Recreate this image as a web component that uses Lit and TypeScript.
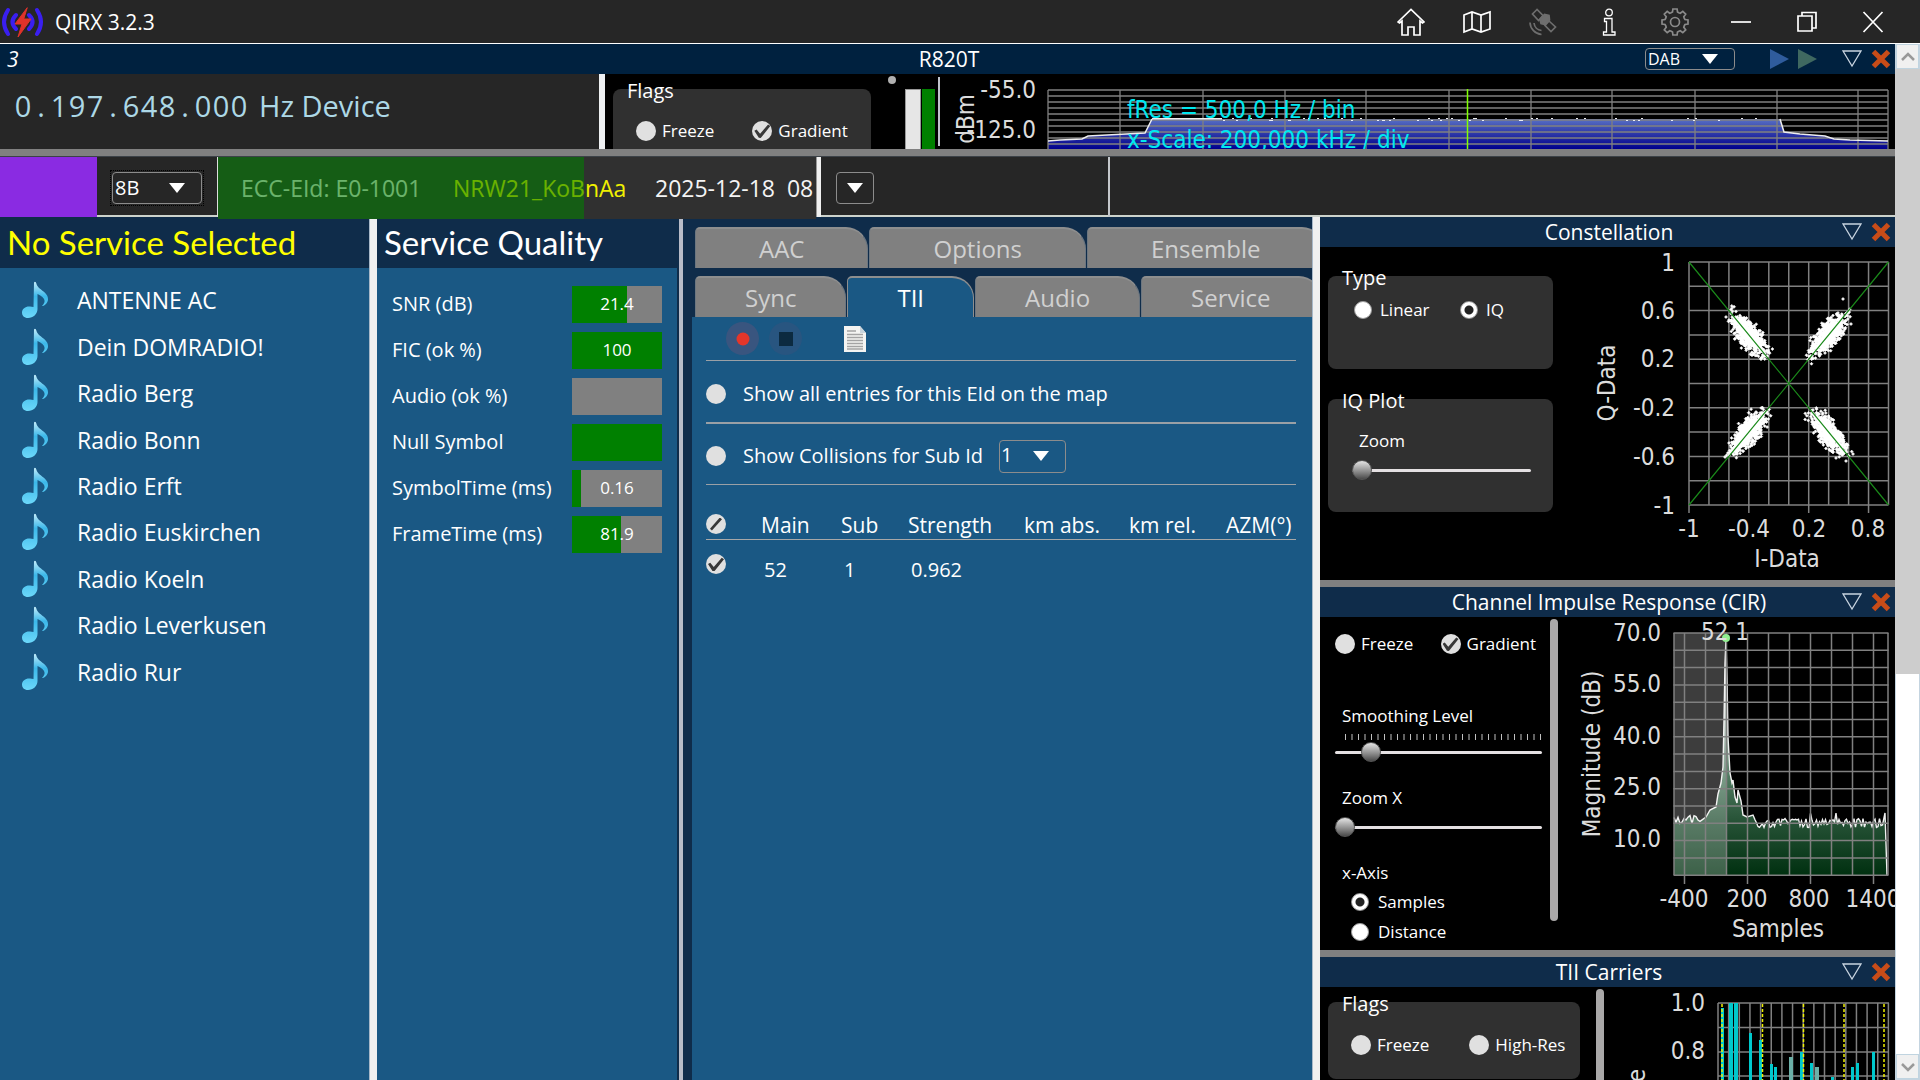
import { LitElement, html, svg, css } from "lit";
import { customElement, property } from "lit/decorators.js";

const line = (x1: number, y1: number, x2: number, y2: number) =>
  svg`<line x1=${x1} y1=${y1} x2=${x2} y2=${y2}></line>`;

const range = (n: number) => Array.from({ length: n }, (_, i) => i);

/** Small deterministic generator so that the plots look the same on each load. */
function seeded(seed: number) {
  let s = seed;
  return () => {
    s = (s * 1664525 + 1013904223) % 4294967296;
    return s / 4294967296;
  };
}

const base = css`
  :host {
    --navy: #0f2c4a;
    --blue: #1a5884;
    --plot: "DejaVu Sans Condensed", "Noto Sans", sans-serif;
    box-sizing: border-box;
    font-family: "Open Sans", "Noto Sans", sans-serif;
    color: #fff;
  }
  *, *::before, *::after { box-sizing: border-box; }
  button {
    background: none; border: 0; padding: 0; margin: 0;
    color: inherit; font: inherit; cursor: pointer;
    display: grid; place-items: center;
  }
  svg { display: block; }
  .check, .radio {
    appearance: none; margin: 0; flex: none;
    width: 20px; height: 20px; border-radius: 50%;
    background: #e0e0e0; display: grid; place-items: center;
  }
  .check.on:checked::before {
    content: ""; width: 16px; height: 14px; background: #383838;
    clip-path: polygon(0 48%, 14% 40%, 36% 70%, 86% 4%, 100% 14%, 40% 100%, 28% 98%);
  }
  .check.part::before {
    content: ""; width: 12px; height: 13px; background: #383838;
    clip-path: polygon(0 86%, 82% 0, 100% 14%, 16% 100%);
  }
  .radio { width: 18px; height: 18px; background: #fff; border: 1px solid #999; }
  .radio:checked { background: radial-gradient(circle, #222 0 4px, #fff 5px); }
  .slider {
    appearance: none; display: block; width: 100%; height: 20px; margin: 0; background: none;
  }
  .slider::-webkit-slider-runnable-track {
    height: 3px; border-radius: 2px; background: #e4e0e2;
  }
  .slider::-webkit-slider-thumb {
    appearance: none; width: 20px; height: 20px; margin-top: -9px; border-radius: 50%;
    border: 1px solid #555; background: linear-gradient(#e4e4e4, #8a8a8a 60%, #4a4a4a);
  }
  .opt { display: flex; align-items: center; gap: 6px; font-size: 17px; line-height: 20px; white-space: nowrap; }
  .combo { display: grid; align-items: center; }
  .combo > * { grid-area: 1 / 1; }
  .combo select {
    appearance: none; width: 100%; height: 100%; margin: 0; padding: 0 2px;
    background: none; color: #fff; border: 1px solid #8c8c8c; border-radius: 4px; font: inherit;
  }
  .combo svg { justify-self: end; margin-right: 17px; pointer-events: none; }
  .group {
    border: 0; margin: 0; padding: 0 14px; min-width: 0;
    background: #303030; border-radius: 8px; position: relative;
  }
  .group legend { padding: 0; float: left; width: 100%; margin-top: -12px; font-size: 20px; line-height: 28px; }
`;

const arrow = html`<svg width="16" height="10" viewBox="0 0 16 10"><path d="M0 0H16L8 10Z" fill="#fff"></path></svg>`;

@customElement("panel-bar")
class PanelBar extends LitElement {
  @property() heading = "";
  @property({ type: Boolean }) top = false;
  static styles = [base, css`
    :host {
      display: grid; grid-template-columns: 1fr auto 1fr; align-items: center;
      height: 30px; padding: 0 4px 0 7px; background: var(--navy); flex: none;
    }
    :host([top]) { background: #00213f; }
    h2 { margin: 0; font-size: 21px; line-height: 28px; font-weight: 400; }
    .right { display: flex; justify-content: flex-end; align-items: center; gap: 9px; }
  `];
  render() {
    return html`
      <slot name="left"><span></span></slot>
      <h2>${this.heading}</h2>
      <div class="right">
        <slot></slot>
        <button aria-label="Collapse ${this.heading}">
          <svg width="20" height="18" viewBox="0 0 20 18"><path d="M1 1H19L10 16Z" fill="none" stroke="#c8d4e0" stroke-width="1.3"></path></svg>
        </button>
        <button aria-label="Close ${this.heading}">
          <svg width="20" height="20" viewBox="0 0 20 20"><path d="M2.5 2.5L17.5 17.5M17.5 2.5L2.5 17.5" stroke="#c84c18" stroke-width="5"></path></svg>
        </button>
      </div>`;
  }
}

@customElement("title-bar")
class TitleBar extends LitElement {
  static styles = [base, css`
    :host {
      display: flex; align-items: center; height: 44px; padding-right: 14px;
      background: #262626; border-bottom: 1px solid #fff; flex: none;
    }
    h1 { margin: 0 auto 0 10px; font-size: 21px; line-height: 28px; font-weight: 400; }
    button { width: 66px; height: 43px; }
    .dim { color: #6e6e6e; }
    .gear { color: #8a8a8a; }
    button svg { fill: none; stroke: currentColor; stroke-width: 1.7; }
    .info svg { stroke-width: 1.3; }
  `];
  render() {
    const teeth = range(8).map((i) => {
      const p = (r: number, d: number) => {
        const a = ((i * 45 + d) * Math.PI) / 180;
        return `${(14 + r * Math.sin(a)).toFixed(1)} ${(14 - r * Math.cos(a)).toFixed(1)}`;
      };
      return `${i ? "L" : "M"}${p(10.3, -14)}L${p(13.2, -9)}L${p(13.2, 9)}L${p(10.3, 14)}L${p(10, 22)}`;
    }).join("") + "Z";
    return html`
      <svg width="45" height="40" viewBox="0 0 45 40" fill="none" stroke="#3a1ff0" stroke-width="4" stroke-linecap="round">
        <path d="M8 8Q0 20 8 32M16 13Q9 20 16 27M37 8Q45 20 37 32M29 13Q36 20 29 27"></path>
        <path d="M27 6L15 22H22L18 35L31 17H24Z" fill="#e0322a" stroke="#e0322a" stroke-width="1"></path>
      </svg>
      <h1>QIRX 3.2.3</h1>
      <button aria-label="Home"><svg width="28" height="28" viewBox="0 0 28 28"><path d="M1 14L14 1.500L27 14L25.500 15L23 13V27H17V19H11V27H5V13L2.500 15Z"></path></svg></button>
      <button aria-label="Map"><svg width="28" height="28" viewBox="0 0 28 28"><path d="M1 7L9 4L18 7L27 4V21L18 24L9 21L1 24ZM9 4V21M18 7V24"></path></svg></button>
      <button class="dim" aria-label="Satellite">
        <svg width="28" height="28" viewBox="0 0 28 28">
          <path d="M8 1.500L3.500 6L9.500 12.500L14 7.500ZM20 13L26.500 19L22 23.500L16 17.500Z"></path>
          <path d="M11 11.500L15.500 6.500L20 7.500L20.500 12L16 16.500L12 15.500Z" fill="currentColor"></path>
          <path d="M5 15A8.500 8.500 0 0 0 12.500 22.500M1 14.500A12.500 12.500 0 0 0 12.500 26.500"></path>
        </svg>
      </button>
      <button class="info" aria-label="Info"><svg width="28" height="28" viewBox="0 0 28 28"><circle cx="14" cy="4.500" r="3.300"></circle><path d="M9.500 10.500H17V24H20V27H8.500V24H11.500V13.500H9.500Z"></path></svg></button>
      <button class="gear" aria-label="Settings"><svg width="28" height="28" viewBox="0 0 28 28"><path d=${teeth}></path><circle cx="14" cy="14" r="4.500"></circle></svg></button>
      <button aria-label="Minimize"><svg width="20" height="20" viewBox="0 0 20 20"><path d="M0 10H20"></path></svg></button>
      <button aria-label="Restore"><svg width="22" height="22" viewBox="0 0 22 22"><path d="M2 5H16V20H2ZM6 5V1.500H20V17H16"></path></svg></button>
      <button aria-label="Close"><svg width="22" height="22" viewBox="0 0 22 22"><path d="M1.500 1L20.500 21M20.500 1L1.500 21"></path></svg></button>`;
  }
}

@customElement("device-row")
class DeviceRow extends LitElement {
  static styles = [base, css`
    :host {
      display: grid; grid-template-columns: minmax(0, 599fr) 6px minmax(0, 337fr) minmax(0, 953fr);
      height: 75px; overflow: hidden; background: #000; flex: none;
    }
    .freq { background: #262626; color: #add8e6; display: flex; padding: 12px 14px; font-size: 29px; line-height: 40px; white-space: pre; }
    .freq i { font-style: normal; width: 18px; text-align: center; }
    .freq b { font-weight: 400; padding-left: 11px; }
    .split { background: #eef0f2; }
    .flags { display: flex; align-items: flex-start; padding-left: 8px; }
    .group { width: 258px; height: 90px; margin-top: 15px; }
    .opts { display: flex; gap: 38px; padding: 16px 0 0 9px; clear: both; }
    .thumb { width: 8px; height: 8px; border-radius: 50%; background: #b0b0b0; margin: 2px 9px 0 17px; flex: none; }
    .meter { display: flex; gap: 1px; height: 60px; margin-top: 15px; width: 30px; flex: none; }
    .meter .a { flex: 1; background: #e6e6e6; border: 1px solid #999; border-bottom: 0; }
    .meter .b { flex: 1; background: #008000; }
    .rule { width: 2px; height: 69px; background: #c0c4cc; margin: 3px 0 0 3px; flex: none; }
    .plot { width: 100%; height: 75px; font-family: var(--plot); font-size: 24px; }
  `];
  render() {
    const rnd = seeded(7);
    const freq = "0.197.648.000";
    const specks = range(60).map(() => {
      const x = Math.round(220 + rnd() * 610);
      return svg`<rect x=${x} y=${rnd() > 0.5 ? 44 : 46} width="2" height="1"></rect>`;
    });
    const outline = "106 67 118 66 140 65 146 62 165 61 203 59 210 45 838 45 842 58 858 60 883 62 892 65 908 66 946 67";
    return html`
      <div class="freq">${[...freq].map((c) => html`<i>${c}</i>`)}<b>Hz Device</b></div>
      <div class="split"></div>
      <div class="flags">
        <fieldset class="group">
          <legend>Flags</legend>
          <div class="opts">
            <label class="opt"><input class="check on" type="checkbox">Freeze</label>
            <label class="opt"><input class="check on" type="checkbox" checked>Gradient</label>
          </div>
        </fieldset>
        <span class="thumb"></span>
        <div class="meter"><span class="a"></span><span class="b"></span></div>
        <span class="rule"></span>
      </div>
      <svg class="plot" viewBox="0 0 953 75" preserveAspectRatio="xMinYMin meet">
        <defs><linearGradient id="sp" gradientUnits="userSpaceOnUse" x1="0" y1="45" x2="0" y2="75">
          <stop offset="0" stop-color="#5870c4"></stop><stop offset=".5" stop-color="#2c36a8"></stop><stop offset="1" stop-color="#00008c"></stop>
        </linearGradient></defs>
        <polygon points="106 75 ${outline} 946 75" fill="url(#sp)"></polygon>
        <g stroke="#808080" stroke-width="1.300">
          ${range(10).map((i) => line(106, 16 + i * 6, 946, 16 + i * 6))}
          ${[106, 178, 261, 343, 424, 507, 589, 670, 753, 835, 916, 946].map((x) => line(x, 16, x, 75))}
        </g>
        <polyline points="106 67 118 66 140 65 146 62 165 61 203 59 210 45" fill="none" stroke="#eee" stroke-width="1.500"></polyline>
        <polyline points="838 45 842 58 858 60 883 62 892 65 908 66 946 67" fill="none" stroke="#eee" stroke-width="1.500"></polyline>
        <g fill="#eee">${specks}<rect x="210" y="44" width="70" height="1.500"></rect></g>
        <line x1="525.500" y1="15" x2="525.500" y2="75" stroke="#7fff00" stroke-width="1.500"></line>
        <g fill="#dcdcdc">
          <text x="94" y="24" text-anchor="end">-55.0</text>
          <text x="94" y="64" text-anchor="end">-125.0</text>
          <text transform="translate(32 45) rotate(-90)" text-anchor="middle">dBm</text>
        </g>
        <g fill="#00e8f0">
          <text x="185" y="44">fRes = 500,0 Hz / bin</text>
          <text x="185" y="74">x-Scale: 200,000 kHz / div</text>
        </g>
      </svg>`;
  }
}

@customElement("channel-row")
class ChannelRow extends LitElement {
  static styles = [base, css`
    :host {
      display: grid; grid-template-columns: 97px 121px minmax(0, 598fr) 5px minmax(0, 289fr) minmax(0, 785fr);
      height: 61px; background: #262626; border-bottom: 2px solid #ccd2cc; border-top: 1px solid #3c4248;
      font-size: 23px; line-height: 30px; flex: none;
    }
    .lamp { background: #8a2be2; }
    .pick { padding: 15px 15px 11px; border-right: 1px solid #ddd; }
    .pick .combo { width: 90px; height: 32px; outline: 1px dotted #000; outline-offset: 1px; font-size: 20px; }
    .ens { position: relative; display: flex; align-items: center; padding-left: 23px; background: #303030; overflow: hidden; white-space: pre; color: #f4f4f4; }
    .ens span { flex: none; }
    .ens .id { width: 212px; }
    .ens .name { width: 202px; color: #f0f000; }
    .fill { position: absolute; inset: 0 auto 0 0; background: rgba(0, 128, 0, 0.56); }
    .split { background: #f0f0f0; border-left: 1px solid #999; }
    .extra { padding: 15px 15px; border-right: 2px solid #c4c8cc; }
    .extra .combo { width: 38px; height: 32px; }
    .extra .combo svg { margin-right: 11px; }
    .extra .combo select { color: transparent; }
  `];
  render() {
    return html`
      <div class="lamp"></div>
      <div class="pick"><div class="combo"><select aria-label="Channel"><option>8B</option></select>${arrow}</div></div>
      <div class="ens">
        <span class="id">ECC-EId: E0-1001</span><span class="name">NRW21_KoBnAa</span><span>2025-12-18  08</span>
        <div class="fill" style="width:61.200%"></div>
      </div>
      <div class="split"></div>
      <div class="extra"><div class="combo"><select aria-label="More"></select>${arrow}</div></div>
      <div></div>`;
  }
}

@customElement("service-list")
class ServiceList extends LitElement {
  static styles = [base, css`
    :host { display: block; background: var(--blue); min-width: 0; }
    h2 { margin: 0; height: 51px; padding: 0 7px; background: var(--navy); color: #ff0; font: 400 33px/50px Lato, sans-serif; white-space: nowrap; }
    ul { list-style: none; margin: 0; padding: 9px 0 0; display: grid; grid-auto-rows: 1fr; height: 427px; }
    button { display: flex; align-items: center; width: 100%; height: 100%; padding-left: 20px; gap: 27px; font-size: 23px; line-height: 30px; }
  `];
  render() {
    const names = ["ANTENNE AC", "Dein DOMRADIO!", "Radio Berg", "Radio Bonn", "Radio Erft", "Radio Euskirchen", "Radio Koeln", "Radio Leverkusen", "Radio Rur"];
    return html`
      <h2>No Service Selected</h2>
      <ul>${names.map((n) => html`<li><button>
        <svg width="30" height="38" viewBox="0 0 30 38">
          <defs><linearGradient id="n" x1="0" y1="0" x2="0" y2="1"><stop offset="0" stop-color="#c4ecfa"></stop><stop offset=".4" stop-color="#3cb8ea"></stop><stop offset="1" stop-color="#6cd8fa"></stop></linearGradient></defs>
          <path d="M14 1.500C15 0 16 1 16.500 3C18 9 29 11 28 19C27 23 24 25 22 25C26 21 26 17 17.500 13V28C17.500 33 13 37 8 37C4 37 2 34.500 2 31.500C2 27.500 6 25 10 25.500L13.500 26Z" fill="url(#n)"></path>
        </svg>${n}</button></li>`)}</ul>`;
  }
}

@customElement("service-quality")
class ServiceQuality extends LitElement {
  static styles = [base, css`
    :host { display: block; background: var(--blue); border-right: 2px solid var(--navy); min-width: 0; }
    h2 { margin: 0; height: 51px; padding: 0 7px; background: var(--navy); font: 400 33px/50px Lato, sans-serif; white-space: nowrap; }
    dl { margin: 0; padding: 13px 15px 0; display: grid; grid-template-columns: 180px 90px; grid-auto-rows: 46px; align-items: center; }
    dt { font-size: 20px; line-height: 28px; white-space: nowrap; }
    dd { margin: 0; height: 37px; background: #808080; display: grid; }
    dd > * { grid-area: 1 / 1; }
    .bar { background: #008000; }
    .val { place-self: center; font-size: 17px; line-height: 24px; }
  `];
  render() {
    const rows: [string, string, number][] = [
      ["SNR (dB)", "21.4", 61], ["FIC (ok %)", "100", 100], ["Audio (ok %)", "", 0],
      ["Null Symbol", "", 100], ["SymbolTime (ms)", "0.16", 10], ["FrameTime (ms)", "81.9", 54],
    ];
    return html`<h2>Service Quality</h2>
      <dl>${rows.map(([k, v, p]) => html`<dt>${k}</dt><dd><span class="bar" style="width:${p}%"></span><span class="val">${v}</span></dd>`)}</dl>`;
  }
}

@customElement("tii-tabs")
class TiiTabs extends LitElement {
  static styles = [base, css`
    :host { display: flex; flex-direction: column; background: var(--navy); min-width: 0; overflow: hidden; padding-left: 9px; }
    .tabs { display: flex; height: 41px; padding-left: 3px; gap: 1px; margin-bottom: 8px; flex: none; }
    .tabs.one { margin-top: 10px; }
    .tabs.two { margin-bottom: 0; }
    .tabs button {
      flex: none; padding: 0 63px; background: #808080; color: #d0d0d0;
      border: 1px solid #6c7680; border-top: 2px solid #8e8e8e; border-bottom: 0; border-radius: 5px 22px 0 0; font-size: 24px; line-height: 30px;
    }
    .tabs.two button { padding: 0 49px; }
    .tabs.two .active { background: var(--blue); color: #fff; border-color: #8e8e8e; }
    .body { flex: 1; background: var(--blue); padding: 3px 16px 0 14px; }
    .tools { display: flex; align-items: center; height: 37px; padding-left: 20px; gap: 10px; margin-bottom: 3px; }
    .tools button { width: 33px; height: 33px; border-radius: 50%; background: #39557f; }
    .tools .stop { background: #285580; }
    .tools .doc { border-radius: 0; background: none; margin-left: 26px; }
    .row { display: flex; align-items: center; gap: 16px; border-top: 1px solid #9aa0a6; height: 62px; padding-top: 4px; font-size: 20px; line-height: 28px; }
    .row label { white-space: nowrap; display: flex; align-items: center; gap: 17px; }
    .row.sub { border-top-width: 2px; padding-top: 4px; }
    .combo { width: 67px; height: 33px; font-size: 20px; }
    .combo select { padding: 0 1px 3px; }
    table { width: 100%; table-layout: fixed; border-collapse: collapse; border-top: 1px solid #9aa0a6; font-size: 20px; line-height: 28px; text-align: left; }
    th, td { font-weight: 400; padding: 0; white-space: nowrap; }
    th { height: 55px; vertical-align: bottom; border-bottom: 1px solid #a8a8a8; font-size: 21px; }
    td { height: 50px; padding: 11px 0 0 3px; vertical-align: middle; }
    th:first-child { padding-bottom: 5px; }
    td:first-child { padding: 3px 0 4px; }
    .c0 { width: 55px; } .c1 { width: 80px; } .c2 { width: 67px; } .c3 { width: 116px; } .c4 { width: 105px; } .c5 { width: 97px; }
  `];
  render() {
    return html`
      <div class="tabs one" role="tablist"><button role="tab">AAC</button><button role="tab">Options</button><button role="tab">Ensemble</button></div>
      <div class="tabs two" role="tablist"><button role="tab">Sync</button><button role="tab" class="active" aria-selected="true">TII</button><button role="tab">Audio</button><button role="tab">Service</button></div>
      <div class="body">
        <div class="tools">
          <button aria-label="Record"><svg width="14" height="14" viewBox="0 0 14 14"><circle cx="7" cy="7" r="6.500" fill="#e4362a"></circle></svg></button>
          <button class="stop" aria-label="Stop"><svg width="14" height="14" viewBox="0 0 14 14"><rect width="14" height="14" fill="#0c2a40"></rect></svg></button>
          <button class="doc" aria-label="Log file"><svg width="24" height="28" viewBox="0 0 24 28"><path d="M1 1H17L23 8V27H1Z" fill="#f4f4f2"></path><path d="M17 1V8H23Z" fill="#c8d4dc"></path><path d="M4 6H13M4 9.500H20M4 12.500H20M4 15.500H20M4 18.500H20M4 21.500H20M4 24H20" stroke="#a4a4a4" stroke-width="1.300"></path></svg></button>
        </div>
        <div class="row"><label><input class="check" type="checkbox">Show all entries for this EId on the map</label></div>
        <div class="row sub"><label><input class="check" type="checkbox">Show Collisions for Sub Id</label>
          <div class="combo"><select aria-label="Sub Id"><option>1</option></select>${arrow}</div></div>
        <table>
          <colgroup><col class="c0"><col class="c1"><col class="c2"><col class="c3"><col class="c4"><col class="c5"><col></colgroup>
          <thead><tr><th><input class="check part" type="checkbox" aria-label="Select all"></th><th>Main</th><th>Sub</th><th>Strength</th><th>km abs.</th><th>km rel.</th><th>AZM(°)</th></tr></thead>
          <tbody><tr><td><input class="check on" type="checkbox" checked aria-label="Select 52"></td><td>52</td><td>1</td><td>0.962</td><td></td><td></td><td></td></tr></tbody>
        </table>
      </div>`;
  }
}

const panelStyles = css`
  .body { display: flex; background: #000; overflow: hidden; }
  .plot { flex: 1; min-width: 0; height: 333px; font-family: var(--plot); font-size: 24px; fill: #dcdcdc; }
`;

@customElement("constellation-panel")
class ConstellationPanel extends LitElement {
  static styles = [base, panelStyles, css`
    :host { display: block; }
    .controls { width: 259px; padding: 29px 26px 0 8px; display: flex; flex-direction: column; gap: 30px; flex: none; }
    .type { height: 93px; }
    .iq { height: 113px; }
    .radios { display: flex; gap: 30px; padding: 8px 0 0 12px; clear: both; }
    .radios .opt { gap: 8px; }
    .radios .opt:first-child { width: 76px; }
    .zoom { display: block; clear: both; padding: 14px 7px 0 17px; font-size: 17px; line-height: 24px; }
    .zoom .slider { margin: 7px 0 0 -7px; width: 179px; }
  `];
  private cloud() {
    const rnd = seeded(21);
    const g = () => rnd() + rnd() + rnd() - 1.500;
    let d = "";
    const mark = (x: number, y: number) => {
      d += `M${x.toFixed(1)} ${(y - 1.500).toFixed(1)}l1.500 1.500l-1.500 1.500l-1.500 -1.500z`;
    };
    for (const [sx, sy] of [[1, 1], [1, -1], [-1, 1], [-1, -1]]) {
      for (let i = 0; i < 620; i++) {
        const r = 0.4 + g() * 0.150;
        const w = g() * 0.066 * (1 - Math.abs(r - 0.4) * 1.200);
        mark(208.500 + sx * (r + w) * 99.500, 137.500 - sy * (r - w) * 121.500);
      }
    }
    for (const [x, y] of [[263, 53], [152, 62], [146, 71], [149, 74], [271, 78], [258, 67], [157, 91], [149, 197], [266, 215], [273, 208], [256, 212], [145, 211]]) mark(x, y);
    return d;
  }
  render() {
    const yl: [string, number][] = [["1", 16], ["0.6", 64], ["0.2", 112], ["-0.2", 161], ["-0.6", 210], ["-1", 259]];
    const xl: [string, number][] = [["-1", 109], ["-0.4", 169], ["0.2", 229], ["0.8", 288]];
    return html`
      <panel-bar heading="Constellation"></panel-bar>
      <div class="body">
        <div class="controls">
          <fieldset class="group type"><legend>Type</legend>
            <div class="radios">
              <label class="opt"><input class="radio" type="radio" name="type">Linear</label>
              <label class="opt"><input class="radio" type="radio" name="type" checked>IQ</label>
            </div>
          </fieldset>
          <fieldset class="group iq"><legend>IQ Plot</legend>
            <label class="zoom">Zoom<input class="slider" type="range" value="0"></label>
          </fieldset>
        </div>
        <svg class="plot" viewBox="0 1 315 333" preserveAspectRatio="xMaxYMin meet">
          <g stroke="#808080" stroke-width="1.500">
            ${range(11).map((i) => line(109 + i * 19.950, 16, 109 + i * 19.950, i % 3 === 0 ? 267 : 259))}
            ${range(11).map((i) => line(109, 16 + i * 24.300, 308.500, 16 + i * 24.300))}
          </g>
          <path d=${this.cloud()} fill="#fff" stroke="#fff" stroke-width=".6"></path>
          <path d="M109 16L308.500 259M308.500 16L109 259" stroke="#1a8a1a" stroke-width="1.200"></path>
          ${yl.map(([t, y]) => svg`<text x="95" y=${y + 9} text-anchor="end">${t}</text>`)}
          ${xl.map(([t, x]) => svg`<text x=${x} y="291" text-anchor="middle">${t}</text>`)}
          <text x="207" y="321" text-anchor="middle">I-Data</text>
          <text transform="translate(35 137) rotate(-90)" text-anchor="middle">Q-Data</text>
        </svg>
      </div>`;
  }
}

@customElement("cir-panel")
class CirPanel extends LitElement {
  static styles = [base, panelStyles, css`
    :host { display: block; }
    .controls { width: 222px; padding: 17px 0 0 15px; flex: none; font-size: 17px; line-height: 24px; }
    .opts { display: flex; justify-content: space-between; padding-right: 6px; }
    .lab { display: block; padding-left: 7px; }
    .smooth { margin-top: 50px; }
    .smooth svg { margin: 6px 0 0 3px; }
    .smooth + .lab { margin-top: 24px; }
    .lab .slider { margin-left: -7px; width: 207px; }
    .smooth .slider { margin-top: 2px; }
    .zoomx .slider { margin-top: 7px; }
    .axis { margin-top: 24px; }
    .radios { display: flex; flex-direction: column; gap: 10px; padding: 7px 0 0 16px; }
    .radios .opt { gap: 9px; }
    .bar { width: 8px; height: 302px; margin: 2px 20px 0 8px; border-radius: 4px; background: #aaa8a8; flex: none; }
  `];
  private curve() {
    const rnd = seeded(5);
    const pts: [number, number][] = [];
    for (let x = 94; x < 122; x += 2) pts.push([x, 203 + (rnd() - 0.5) * 10]);
    pts.push([126, 200], [130, 193], [136, 190], [138, 177], [141, 166], [143, 150], [144, 103], [145, 46], [146, 22], [147, 60], [148, 120], [150, 156], [152, 166], [153, 163], [155, 180], [157, 186], [158, 173], [161, 184], [163, 198], [167, 200], [173, 198]);
    for (let x = 175; x < 304; x += 1.500) pts.push([x, 206 + (rnd() - 0.5) * 9 - (rnd() > 0.93 ? 7 : 0)]);
    pts.push([305, 196], [307, 258]);
    return pts.map(([x, y]) => `${x} ${y.toFixed(1)}`).join(" ");
  }
  render() {
    const c = this.curve();
    const yl: [string, number][] = [["70.0", 15], ["55.0", 66], ["40.0", 118], ["25.0", 169], ["10.0", 221]];
    const xl: [string, number][] = [["-400", 104], ["200", 167], ["800", 229], ["1400", 293]];
    return html`
      <panel-bar heading="Channel Impulse Response (CIR)"></panel-bar>
      <div class="body">
        <div class="controls">
          <div class="opts">
            <label class="opt"><input class="check on" type="checkbox">Freeze</label>
            <label class="opt"><input class="check on" type="checkbox" checked>Gradient</label>
          </div>
          <label class="lab smooth">Smoothing Level
            <svg width="197" height="6" viewBox="0 0 197 6" stroke="#c0c0c0">${range(31).map((i) => line(0.5 + i * 6.500, 0, 0.5 + i * 6.500, 6))}</svg>
            <input class="slider" type="range" value="14"></label>
          <label class="lab zoomx">Zoom X<input class="slider" type="range" value="0"></label>
          <div class="lab axis">x-Axis</div>
          <div class="radios">
            <label class="opt"><input class="radio" type="radio" name="axis" checked>Samples</label>
            <label class="opt"><input class="radio" type="radio" name="axis">Distance</label>
          </div>
        </div>
        <div class="bar"></div>
        <svg class="plot" viewBox="0 0 315 333" preserveAspectRatio="xMaxYMin meet">
          <defs><linearGradient id="g" gradientUnits="userSpaceOnUse" x1="0" y1="80" x2="0" y2="258">
            <stop offset="0" stop-color="#d8e0dc"></stop><stop offset=".45" stop-color="#4f7a60"></stop><stop offset=".7" stop-color="#265236"></stop><stop offset="1" stop-color="#003010"></stop>
          </linearGradient></defs>
          <polygon points="94 258 ${c} 307 258" fill="url(#g)"></polygon>
          <polyline points=${c} fill="none" stroke="#f0f0f0" stroke-width="1.400"></polyline>
          <rect x="94" y="16" width="52" height="242" fill="#fff" opacity=".24"></rect>
          <g stroke="#808080" stroke-width="1.500">
            ${range(10).map((i) => line(104.500 + i * 21, 16, 104.500 + i * 21, i % 3 === 0 ? 267 : 258))}
            ${line(94, 16, 94, 258)}${line(308, 16, 308, 258)}
            ${range(15).map((i) => line(93.500, 16 + i * 17.300, 308.500, 16 + i * 17.300))}
          </g>
          <circle cx="146" cy="21" r="4" fill="#90ee90"></circle>
          ${yl.map(([t, y]) => svg`<text x="81" y=${y + 9} text-anchor="end">${t}</text>`)}
          ${xl.map(([t, x]) => svg`<text x=${x} y="290" text-anchor="middle">${t}</text>`)}
          <text x="121" y="23">52 1</text>
          <text x="198" y="320" text-anchor="middle">Samples</text>
          <text transform="translate(20 137) rotate(-90)" text-anchor="middle">Magnitude (dB)</text>
        </svg>
      </div>`;
  }
}

@customElement("carriers-panel")
class CarriersPanel extends LitElement {
  static styles = [base, panelStyles, css`
    :host { display: block; overflow: hidden; }
    .group { width: 252px; height: 77px; margin: 15px 16px 0 8px; flex: none; }
    .opts { display: flex; gap: 40px; padding: 17px 0 0 9px; clear: both; }
    .bar { width: 8px; height: 120px; margin-top: 2px; border-radius: 4px; background: #aaa8a8; flex: none; }
    .plot { height: 93px; }
  `];
  render() {
    const bars: [number, number, number][] = [
      [117, 21, 3], [125, 16, 4], [130, 16, 4], [145, 46, 3], [155, 53, 3], [166, 77, 3], [170, 80, 3], [185, 70, 4],
      [196, 65, 3], [206, 76, 3], [211, 80, 4], [227, 90, 3], [247, 80, 3], [252, 76, 3], [268, 65, 3],
    ];
    return html`
      <panel-bar heading="TII Carriers"></panel-bar>
      <div class="body">
        <fieldset class="group"><legend>Flags</legend>
          <div class="opts">
            <label class="opt"><input class="check" type="checkbox">Freeze</label>
            <label class="opt"><input class="check" type="checkbox">High-Res</label>
          </div>
        </fieldset>
        <div class="bar"></div>
        <svg class="plot" viewBox="0 0 291 93" preserveAspectRatio="xMaxYMin meet">
          <g stroke="#808080" stroke-width="1.500">
            ${range(17).map((i) => line(114 + i * 10.650, 16, 114 + i * 10.650, 93))}
            ${[16, 40.500, 65, 89].map((y) => line(114, y, 285, y))}
          </g>
          ${bars.map(([x, y, w]) => svg`<rect x=${x} y=${y} width=${w} height=${93 - y} fill=${x === 185 || x === 211 ? "#6cb0a8" : "#00c8cc"}></rect>`)}
          <g stroke="#f0f000" stroke-width="1.500" stroke-dasharray="3 2">${[118, 158.500, 199.500, 240, 280].map((x) => line(x, 17, x, 93))}</g>
          <text x="101" y="24" text-anchor="end">1.0</text>
          <text x="101" y="72" text-anchor="end">0.8</text>
          <text transform="translate(41 82) rotate(-90)" text-anchor="end">Magnitude</text>
        </svg>
      </div>`;
  }
}

@customElement("app-root")
class AppRoot extends LitElement {
  static styles = [base, css`
    :host { display: flex; flex-direction: column; height: 100vh; overflow: hidden; background: #000; }
    .page { flex: 1; min-height: 0; display: grid; grid-template-columns: minmax(0, 1fr) 25px; }
    .left { display: flex; flex-direction: column; min-height: 0; }
    .three { font-style: italic; font-size: 21px; line-height: 28px; }
    .gray { height: 7px; background: #808080; flex: none; }
    .main {
      flex: 1; min-height: 0; overflow: hidden; display: grid; grid-template-rows: minmax(0, 1fr);
      grid-template-columns: minmax(0, 369fr) 8px minmax(0, 302fr) 4px minmax(0, 629fr) 8px minmax(0, 575fr);
    }
    .sp { background: #f0f0f0; border-left: 1px solid #a8b8c8; }
    .sp.thin { background: #b8bcc8; border: 0; }
    .right { min-width: 0; overflow: hidden; }
    .combo { width: 90px; height: 22px; font-size: 16px; line-height: 20px; margin-right: 26px; }
    .plays { display: flex; gap: 9px; margin-right: 16px; }
    .scroll { display: flex; flex-direction: column; background: #fff; border: 1px solid #c4d4e0; border-top: 0; }
    .scroll button { height: 25px; background: #f0f0f0; border: 1px solid #c0d4e0; flex: none; }
    .scroll .thumb { background: #cdcdcd; margin: 0 -1px; flex: 0 0 605px; }
    .scroll .rest { flex: 1; }
  `];
  render() {
    return html`
      <title-bar></title-bar>
      <div class="page">
        <div class="left">
          <panel-bar top heading="R820T">
            <span slot="left" class="three">3</span>
            <div class="combo"><select aria-label="Mode"><option>DAB</option></select>${arrow}</div>
            <div class="plays">
              <button aria-label="Play"><svg width="19" height="20" viewBox="0 0 19 20"><path d="M0 0L19 10L0 20Z" fill="#2f5c9c"></path></svg></button>
              <button aria-label="Play all"><svg width="19" height="20" viewBox="0 0 19 20"><path d="M0 0L19 10L0 20Z" fill="#3f6860"></path></svg></button>
            </div>
          </panel-bar>
          <device-row></device-row>
          <div class="gray"></div>
          <channel-row></channel-row>
          <div class="main">
            <service-list></service-list>
            <div class="sp"></div>
            <service-quality></service-quality>
            <div class="sp thin"></div>
            <tii-tabs></tii-tabs>
            <div class="sp"></div>
            <div class="right">
              <constellation-panel></constellation-panel>
              <div class="gray"></div>
              <cir-panel></cir-panel>
              <div class="gray"></div>
              <carriers-panel></carriers-panel>
            </div>
          </div>
        </div>
        <div class="scroll">
          <button aria-label="Scroll up"><svg width="14" height="10" viewBox="0 0 14 10"><path d="M1 8L7 2L13 8" fill="none" stroke="#999" stroke-width="2.500"></path></svg></button>
          <div class="thumb"></div><div class="rest"></div>
          <button aria-label="Scroll down"><svg width="14" height="10" viewBox="0 0 14 10"><path d="M1 2L7 8L13 2" fill="none" stroke="#999" stroke-width="2.500"></path></svg></button>
        </div>
      </div>`;
  }
}
